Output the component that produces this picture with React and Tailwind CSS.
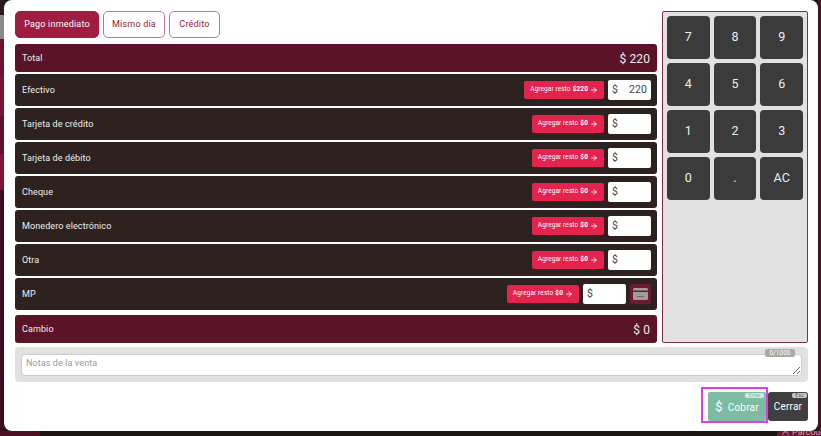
import React from 'react';
import { ArrowRight, UserRound } from 'lucide-react';

const METODOS = [
  { nombre: 'Efectivo', resto: '$220', valor: '220' },
  { nombre: 'Tarjeta de crédito', resto: '$0', valor: '' },
  { nombre: 'Tarjeta de débito', resto: '$0', valor: '' },
  { nombre: 'Cheque', resto: '$0', valor: '' },
  { nombre: 'Monedero electrónico', resto: '$0', valor: '' },
  { nombre: 'Otra', resto: '$0', valor: '' },
  { nombre: 'MP', resto: '$0', valor: '', tarjeta: true },
];

const TECLAS = ['7', '8', '9', '4', '5', '6', '1', '2', '3', '0', '.', 'AC'];

function Tab({ activo, ancho, children }) {
  return (
    <button
      type="button"
      className={`h-[27px] rounded-[5px] border text-[9px] tracking-[0.2px] ${ancho} ${activo ? 'border-[#a01c40] bg-[#a01c40] text-white' : 'border-[#c8738a] bg-white text-[#8f2040]'}`}
    >
      {children}
    </button>
  );
}

function IconoTarjeta() {
  return (
    <svg width="15" height="12" viewBox="0 0 15 12">
      <rect width="15" height="12" rx="1.5" fill="#a39c9c" />
      <rect y="2.5" width="15" height="1.5" fill="#6b1d2f" />
      <rect x="4" y="8" width="7" height="1" fill="#6f6868" />
    </svg>
  );
}

function FilaMetodo({ metodo }) {
  return (
    <div className="flex h-[32px] items-center justify-between rounded-[3px] bg-[#2e2220] pl-[7px] pr-[6px] text-[9px] tracking-[0.1px] text-[#eee]">
      <span className="pt-[2px]">{metodo.nombre}</span>
      <div className="flex items-center">
        <button type="button" className="flex h-[18px] items-center gap-[2px] rounded-[2px] bg-[#e4234f] px-[6px] text-[6.5px] text-white">
          Agregar resto <b>{metodo.resto}</b>
          <ArrowRight size={8} strokeWidth={2.5} />
        </button>
        <div className="ml-[4px] flex h-[20px] w-[43px] items-center justify-between rounded-[2px] bg-white px-[4px] text-[10.5px] text-[#444]">
          <span>$</span>
          <span>{metodo.valor}</span>
        </div>
        {metodo.tarjeta && (
          <div className="ml-[4px] flex h-[20px] w-[21px] items-center justify-center rounded-[2px] bg-[#6b1d2f]">
            <IconoTarjeta />
          </div>
        )}
      </div>
    </div>
  );
}

function FilaTotal({ label, valor }) {
  return (
    <div className="flex h-[28px] items-center justify-between rounded-[3px] bg-[#5a1327] px-[7px] text-[9px] tracking-[0.1px] text-[#eee]">
      <span className="pt-[2px]">{label}</span>
      <span className="pt-[1px] text-[12px]">{valor}</span>
    </div>
  );
}

export default function App() {
  return (
    <div className="flex h-[436px] w-[821px] flex-col overflow-hidden bg-[#1c1614] font-['Roboto',sans-serif]">
      <div className="flex h-[431px]">
        <div className="flex w-[4px] flex-col">
          <div className="h-[15px] bg-[#2a1a1c]" />
          <div className="h-[24px] bg-[#8a8a8a]" />
          <div className="h-[38px] bg-[#6b1530]" />
          <div className="h-[39px] bg-[#7a1633]" />
          <div className="h-[38px] bg-[#5a1328]" />
          <div className="h-[36px] bg-[#801535]" />
          <div className="flex-1 bg-[#3a0d1c]" />
        </div>
        <div className="h-[431px] w-[814px] rounded-[8px] bg-white pl-[11px] pr-[10px] pt-[11px]">
          <div className="flex gap-[5px]">
            <div className="w-[642px]">
              <div className="flex gap-[4px]">
                <Tab activo ancho="w-[84px]">Pago inmediato</Tab>
                <Tab ancho="w-[62px]">Mismo día</Tab>
                <Tab ancho="w-[51px]">Crédito</Tab>
              </div>
              <div className="mt-[6px] flex flex-col gap-[2px]">
                <FilaTotal label="Total" valor="$ 220" />
                {METODOS.map((metodo) => (
                  <FilaMetodo key={metodo.nombre} metodo={metodo} />
                ))}
                <div className="mt-[3px]">
                  <FilaTotal label="Cambio" valor="$ 0" />
                </div>
              </div>
            </div>
            <div className="grid h-[332px] w-[146px] grid-cols-3 content-start gap-[4px] rounded-[2px] border border-[#7b3049] bg-[#e1e1e1] p-[4px]">
              {TECLAS.map((tecla) => (
                <button key={tecla} type="button" className="h-[43px] rounded-[4px] bg-[#3b3b3b] text-[12.5px] text-[#eee]">
                  {tecla}
                </button>
              ))}
            </div>
          </div>
          <div className="relative mt-[4px] h-[35px] rounded-[4px] bg-[#e1e1e1] px-[6px] pt-[7px]">
            <span className="absolute right-[13px] top-[2px] z-10 w-[30px] rounded-[2px] bg-[#a8a8a8] text-center text-[6.5px] leading-[8px] text-white">0/1000</span>
            <textarea
              placeholder="Notas de la venta"
              className="block h-[22px] min-h-[22px] w-full rounded-[4px] border border-[#ccc] bg-white px-[4px] text-[9px] leading-[16px] tracking-[0.1px] text-[#444] outline-none placeholder:text-[#999]"
            />
          </div>
          <div className="mt-[5px] flex justify-end">
            <div className="border-[2px] border-[#e23ce0] pl-[5px] pt-[3px]">
              <button type="button" className="relative block h-[29px] w-[58px] rounded-[2px] bg-[#7dbba2] text-[10px] tracking-[0.2px] text-white">
                <span className="absolute right-[2px] top-[1px] rounded-[2px] bg-[#d8e8e2] px-[3px] text-[5px] leading-[5px] text-[#7dbba2]">Enter</span>
                <span className="mr-[5px] text-[13px]">$</span>Cobrar
              </button>
            </div>
            <button type="button" className="relative mt-[5px] h-[29px] w-[40px] rounded-[3px] bg-[#3f3f3f] text-[10px] tracking-[0.2px] text-white">
              <span className="absolute right-[1px] top-[1px] rounded-[2px] bg-[#ccc] px-[3px] text-[5px] leading-[5px] text-[#444]">Esc</span>
              Cerrar
            </button>
          </div>
        </div>
        <div className="w-[3px] bg-[#4d1025]" />
      </div>
      <div className="flex h-[5px] justify-between overflow-hidden">
        <div className="w-[40px] bg-[#4d1025]" />
        <div className="flex w-[44px] items-start gap-[2px] bg-[#6b1530] pl-[4px] text-[#c9a4ae]">
          <UserRound size={9} className="mt-[-4px] shrink-0" />
          <span className="mt-[-4px] whitespace-nowrap text-[9px] leading-[10px]">Parcoud</span>
        </div>
      </div>
    </div>
  );
}
